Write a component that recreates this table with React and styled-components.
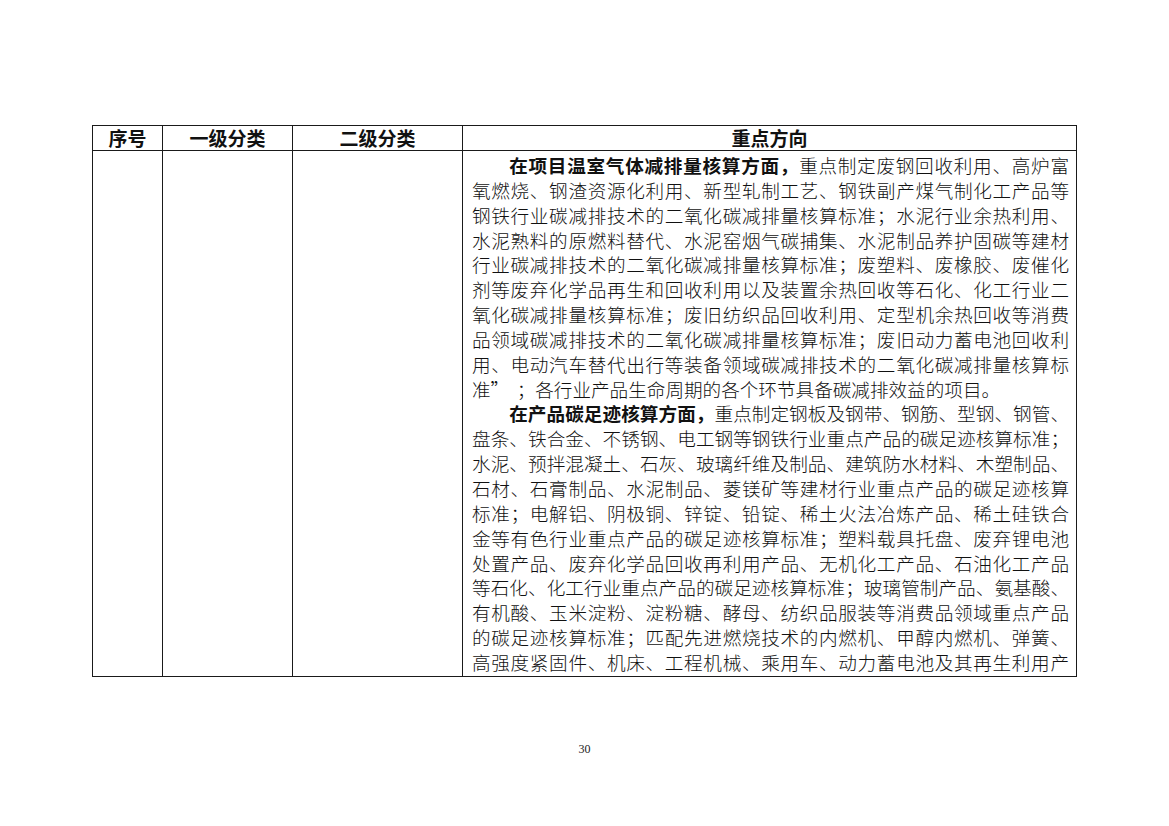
import React from 'react';
import styled, { createGlobalStyle } from 'styled-components';

const GlobalStyle = createGlobalStyle`
    html, body {
        margin: 0;
        padding: 0;
        background: #ffffff;
    }
    body {
        font-family: "Noto Sans CJK SC", "Noto Sans", sans-serif;
        color: #111;
    }
`

// 全角引号单独占位，和原文排版一致
const Quote = styled.span`
    display: inline-block;
    width: 1.4em;
    text-align: center;
    text-indent: 0;
`

const paragraphs = [
    {
        lead: '在项目温室气体减排量核算方面，',
        lines: [
            '重点制定废钢回收利用、高炉富',
            '氧燃烧、钢渣资源化利用、新型轧制工艺、钢铁副产煤气制化工产品等',
            '钢铁行业碳减排技术的二氧化碳减排量核算标准；水泥行业余热利用、',
            '水泥熟料的原燃料替代、水泥窑烟气碳捕集、水泥制品养护固碳等建材',
            '行业碳减排技术的二氧化碳减排量核算标准；废塑料、废橡胶、废催化',
            '剂等废弃化学品再生和回收利用以及装置余热回收等石化、化工行业二',
            '氧化碳减排量核算标准；废旧纺织品回收利用、定型机余热回收等消费',
            '品领域碳减排技术的二氧化碳减排量核算标准；废旧动力蓄电池回收利',
            '用、电动汽车替代出行等装备领域碳减排技术的二氧化碳减排量核算标',
            <>准<Quote>”</Quote>；各行业产品生命周期的各个环节具备碳减排效益的项目。</>,
        ],
        lastJustified: false,
    },
    {
        lead: '在产品碳足迹核算方面，',
        lines: [
            '重点制定钢板及钢带、钢筋、型钢、钢管、',
            '盘条、铁合金、不锈钢、电工钢等钢铁行业重点产品的碳足迹核算标准；',
            '水泥、预拌混凝土、石灰、玻璃纤维及制品、建筑防水材料、木塑制品、',
            '石材、石膏制品、水泥制品、菱镁矿等建材行业重点产品的碳足迹核算',
            '标准；电解铝、阴极铜、锌锭、铅锭、稀土火法冶炼产品、稀土硅铁合',
            '金等有色行业重点产品的碳足迹核算标准；塑料载具托盘、废弃锂电池',
            '处置产品、废弃化学品回收再利用产品、无机化工产品、石油化工产品',
            '等石化、化工行业重点产品的碳足迹核算标准；玻璃管制产品、氨基酸、',
            '有机酸、玉米淀粉、淀粉糖、酵母、纺织品服装等消费品领域重点产品',
            '的碳足迹核算标准；匹配先进燃烧技术的内燃机、甲醇内燃机、弹簧、',
            '高强度紧固件、机床、工程机械、乘用车、动力蓄电池及其再生利用产',
        ],
        lastJustified: true,
    },
]

const columns = [
    { title: '序号', width: 70 },
    { title: '一级分类', width: 130 },
    { title: '二级分类', width: 170 },
    { title: '重点方向', width: 614 },
]

const App = () => {
    return (
        <>
            <GlobalStyle />
            <Page>
                <Table>
                    <colgroup>
                        {columns.map(c => <col key={c.title} style={{ width: c.width }} />)}
                    </colgroup>
                    <thead>
                        <tr>
                            {columns.map(c => <HeadCell key={c.title}>{c.title}</HeadCell>)}
                        </tr>
                    </thead>
                    <tbody>
                        <tr>
                            <EmptyCell />
                            <EmptyCell />
                            <EmptyCell />
                            <TextCell>
                                {paragraphs.map((p, pi) => (
                                    <div key={pi}>
                                        {p.lines.map((line, li) => {
                                            const isLast = li === p.lines.length - 1
                                            return (
                                                <Line
                                                    key={li}
                                                    $indent={li === 0}
                                                    $justify={!isLast || p.lastJustified}
                                                >
                                                    {li === 0 && <Lead>{p.lead}</Lead>}
                                                    {line}
                                                </Line>
                                            )
                                        })}
                                    </div>
                                ))}
                            </TextCell>
                        </tr>
                    </tbody>
                </Table>
                <PageNumber>30</PageNumber>
            </Page>
        </>
    );
};

const Page = styled.div`
    width: 1169px;
    height: 826px;
    box-sizing: border-box;
    padding-top: 125px;
`

const Table = styled.table`
    border-collapse: collapse;
    table-layout: fixed;
    width: 985px;
    margin-left: 92px;
`

const HeadCell = styled.th`
    border: 1px solid #1a1a1a;
    height: 24px;
    padding: 0;
    font-size: 19px;
    font-weight: 700;
    line-height: 24px;
    text-align: center;
    color: #111;
`

const EmptyCell = styled.td`
    border: 1px solid #1a1a1a;
    padding: 0;
`

const TextCell = styled.td`
    border: 1px solid #1a1a1a;
    padding: 2px 7px 1px 9px;
    vertical-align: top;
`

const Line = styled.div`
    font-size: 18.6px;
    font-weight: 300;
    line-height: 24.85px;
    white-space: nowrap;
    text-indent: ${props => props.$indent ? '2em' : '0'};
    text-align: ${props => props.$justify ? 'justify' : 'left'};
    text-align-last: ${props => props.$justify ? 'justify' : 'left'};
    text-justify: inter-character;
`

const Lead = styled.span`
    font-weight: 700;
`

const PageNumber = styled.div`
    margin-top: 65px;
    text-align: center;
    font-family: "Liberation Serif", serif;
    font-size: 12px;
    color: #222;
`

export default App;
